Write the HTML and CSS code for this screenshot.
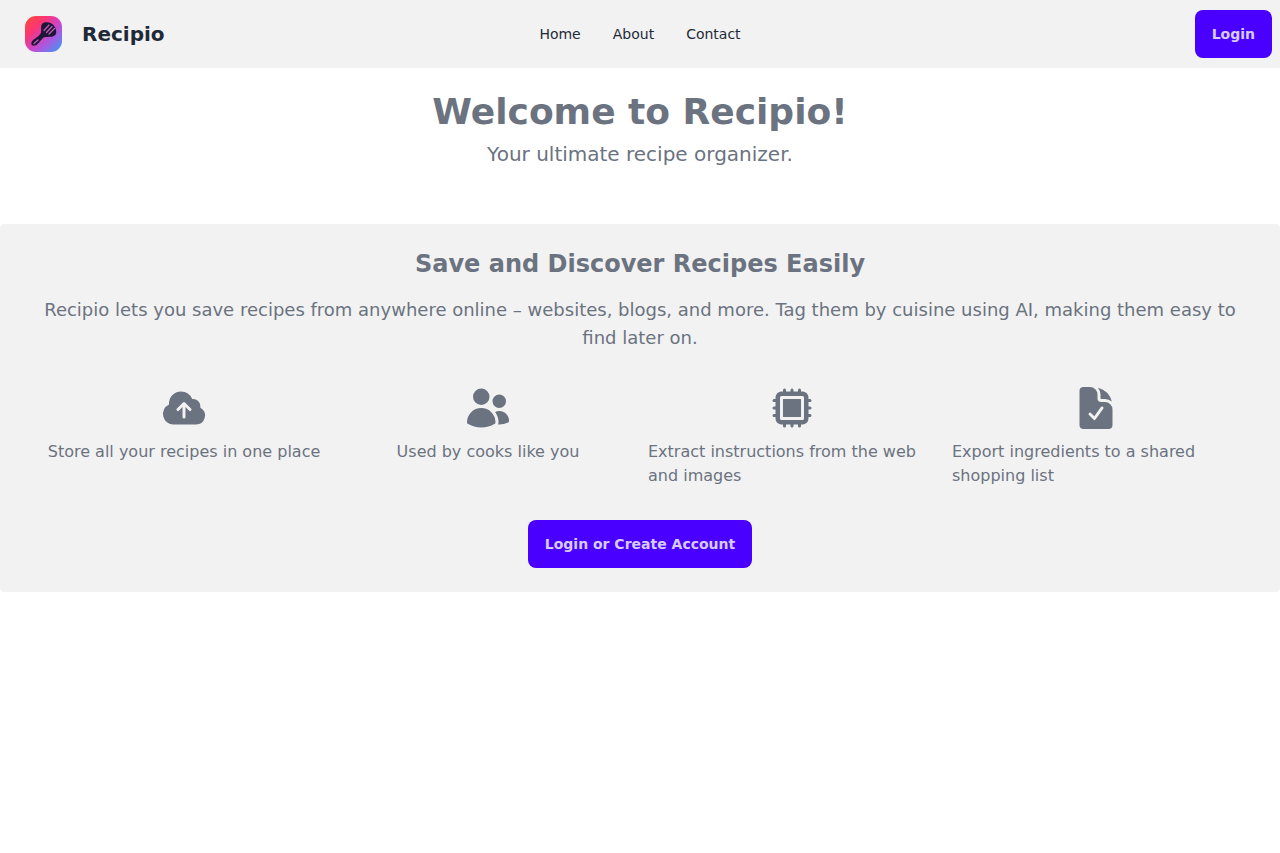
FILE: index.html
```html
<!DOCTYPE html>
<html lang="en">
<head>
  <meta charset="UTF-8">
  <title>Recipio</title>
  <meta name="viewport" content="width=device-width, initial-scale=1.0">
  <link rel="stylesheet" href="styles.css">
</head>

<body>

<header class="navbar">
  <div class="navbar-start">
    <a class="brand" href="#">
      <svg class="logo" viewBox="0 0 37 36" aria-hidden="true">
        <defs>
          <linearGradient id="logoBg" x1="0" y1="0" x2="1" y2="1">
            <stop offset="0.05" stop-color="#ff4a3c"/>
            <stop offset="0.3" stop-color="#fb3574"/>
            <stop offset="0.55" stop-color="#cf45c8"/>
            <stop offset="0.75" stop-color="#8f68e8"/>
            <stop offset="0.95" stop-color="#3f98ea"/>
          </linearGradient>
        </defs>
        <rect width="37" height="36" rx="11" fill="url(#logoBg)"/>
        <!-- spatula -->
        <path d="M17 8C18.500 5.800 23 5.600 26 7.200C29 8.800 31.500 12.500 31.200 16C31 19.500 29 20.500 25.500 20.800C21 21 19 21 17.500 22.500L12.500 28C10.500 30.300 6.500 30.300 6.300 27.500C6.200 25.500 8 24 9.500 23L13.500 20C15.800 18 16.300 16.500 16.200 13.500C16.100 11 16.100 9.500 17 8Z" fill="#1d1637"/>
        <path class="slots" d="M19 14.500L24 9M21.500 16.500L27 10.500M24 18L29.500 12.500"/>
        <path class="slots" d="M9 27.500L13 24"/>
      </svg>
      <span>Recipio</span>
    </a>
  </div>
  <nav class="menu">
    <a href="#">Home</a>
    <a href="#">About</a>
    <a href="#">Contact</a>
  </nav>
  <div class="navbar-end">
    <button class="btn" type="button">Login</button>
  </div>
</header>

<main>
  <div class="hero">
    <h1>Welcome to Recipio!</h1>
    <p>Your ultimate recipe organizer.</p>
  </div>

  <section class="features">
    <h2>Save and Discover Recipes Easily</h2>
    <p class="intro">Recipio lets you save recipes from anywhere online – websites, blogs, and more. Tag them by cuisine using AI, making them easy to find later on.</p>
    <div class="feature-grid">
      <div class="feature">
        <svg class="icon" viewBox="0 0 24 24" aria-hidden="true">
          <path fill-rule="evenodd" d="M10.5 3.75a6 6 0 0 0-5.98 6.496A5.25 5.25 0 0 0 6.75 20.25H18a4.5 4.5 0 0 0 2.206-8.423 3.75 3.75 0 0 0-4.133-4.303A6.001 6.001 0 0 0 10.5 3.75Zm2.03 5.47a.75.75 0 0 0-1.06 0l-3 3a.75.75 0 1 0 1.06 1.06l1.72-1.72v4.94a.75.75 0 0 0 1.5 0v-4.94l1.72 1.72a.75.75 0 1 0 1.06-1.06l-3-3Z"/>
        </svg>
        <p>Store all your recipes in one place</p>
      </div>
      <div class="feature">
        <svg class="icon" viewBox="0 0 24 24" aria-hidden="true">
          <path d="M4.5 6.375a4.125 4.125 0 1 1 8.25 0 4.125 4.125 0 0 1-8.25 0ZM14.25 8.625a3.375 3.375 0 1 1 6.75 0 3.375 3.375 0 0 1-6.75 0ZM1.5 19.125a7.125 7.125 0 0 1 14.25 0v.003l-.001.119a.75.75 0 0 1-.363.63 13.067 13.067 0 0 1-6.761 1.873c-2.472 0-4.786-.684-6.76-1.873a.75.75 0 0 1-.364-.63l-.001-.122ZM17.25 19.128l-.001.144a2.25 2.25 0 0 1-.233.96 10.088 10.088 0 0 0 5.06-1.01.75.75 0 0 0 .42-.643 4.875 4.875 0 0 0-6.957-4.611 8.586 8.586 0 0 1 1.71 5.157v.003Z"/>
        </svg>
        <p>Used by cooks like you</p>
      </div>
      <div class="feature">
        <svg class="icon" viewBox="0 0 24 24" aria-hidden="true">
          <path d="M16.5 7.5h-9v9h9v-9Z"/>
          <path fill-rule="evenodd" d="M8.25 2.25A.75.75 0 0 1 9 3v.75h2.25V3a.75.75 0 0 1 1.5 0v.75H15V3a.75.75 0 0 1 1.5 0v.75h.75a3 3 0 0 1 3 3v.75H21A.75.75 0 0 1 21 9h-.75v2.25H21a.75.75 0 0 1 0 1.5h-.75V15H21a.75.75 0 0 1 0 1.5h-.75v.75a3 3 0 0 1-3 3h-.75V21a.75.75 0 0 1-1.5 0v-.75h-2.25V21a.75.75 0 0 1-1.5 0v-.75H9V21a.75.75 0 0 1-1.5 0v-.75h-.75a3 3 0 0 1-3-3v-.75H3A.75.75 0 0 1 3 15h.75v-2.25H3a.75.75 0 0 1 0-1.5h.75V9H3a.75.75 0 0 1 0-1.5h.75v-.75a3 3 0 0 1 3-3h.75V3a.75.75 0 0 1 .75-.75ZM6 6.75A.75.75 0 0 1 6.75 6h10.5a.75.75 0 0 1 .75.75v10.5a.75.75 0 0 1-.75.75H6.75a.75.75 0 0 1-.75-.75V6.75Z"/>
        </svg>
        <p>Extract instructions from the web and images</p>
      </div>
      <div class="feature">
        <svg class="icon" viewBox="0 0 24 24" aria-hidden="true">
          <path fill-rule="evenodd" d="M9 1.5H5.625c-1.036 0-1.875.84-1.875 1.875v17.25c0 1.035.84 1.875 1.875 1.875h12.75c1.035 0 1.875-.84 1.875-1.875V12.75A3.75 3.75 0 0 0 16.5 9h-1.875a1.875 1.875 0 0 1-1.875-1.875V5.25A3.75 3.75 0 0 0 9 1.5Zm6.61 10.936a.75.75 0 1 0-1.22-.872l-3.236 4.53L9.53 14.47a.75.75 0 0 0-1.06 1.06l2.25 2.25a.75.75 0 0 0 1.14-.094l3.75-5.25Z"/>
          <path d="M12.971 1.816A5.23 5.23 0 0 1 14.25 5.25v1.875c0 .207.168.375.375.375H16.5a5.23 5.23 0 0 1 3.434 1.279 9.768 9.768 0 0 0-6.963-6.963Z"/>
        </svg>
        <p>Export ingredients to a shared shopping list</p>
      </div>
    </div>
    <button class="btn" type="button">Login or Create Account</button>
  </section>
</main>

</body>
</html>
```

FILE: styles.css
```css
* {margin:0;padding:0;box-sizing:border-box}
body {
  background: #fff;
  color: #6b7280;
  font-family: "DejaVu Sans", sans-serif;
  font-size: 16px;
  line-height: 24px;
}
a {
  color: inherit;
  text-decoration: none;
}

.navbar {
  display: flex;
  align-items: center;
  padding: 10px 8px;
  background: #f2f2f2;
  color: #1f2937;
}
.navbar-start,.navbar-end {
  flex: 1;
  display: flex;
  align-items: center;
}
.navbar-end {justify-content:flex-end;}
.brand {
  display: flex;
  align-items: center;
  gap: 20px;
  padding-left: 17px;
  font-size: 20px;
  line-height: 28px;
  font-weight: 700;
}
.logo {
  width: 37px;
  height: 36px;
}
.slots {
  fill: none;
  stroke: #c65bb8;
  stroke-width: 1.2;
  stroke-linecap: round;
}
.menu {
  display: flex;
  gap: 32px;
  font-size: 14px;
  line-height: 20px;
}

.btn {
  height: 48px;
  padding: 0 17px;
  background: #4a00ff;
  color: #d6ccff;
  border: none;
  border-radius: 8px;
  font-family: inherit;
  font-size: 14px;
  font-weight: 600;
  cursor: pointer;
}

.hero {
  padding: 24px 32px 56px;
  text-align: center;
}
.hero h1 {
  font-size: 36px;
  line-height: 40px;
  margin-bottom: 8px;
}
.hero p {
  font-size: 20px;
  line-height: 28px;
}

.features {
  padding: 24px 32px;
  background: #f2f2f2;
  border-radius: 4px;
  text-align: center;
}
.features h2 {
  font-size: 24px;
  line-height: 32px;
  margin-bottom: 16px;
}
.intro {
  font-size: 18px;
  line-height: 28px;
  margin-bottom: 24px;
}
.feature-grid {
  display: grid;
  grid-template-columns: repeat(4, 1fr);
  margin-bottom: 24px;
}
.feature {
  display: flex;
  flex-direction: column;
  align-items: center;
  gap: 8px;
  padding: 8px;
  text-align: left;
}
.icon {
  width: 48px;
  height: 48px;
  fill: #6b7280;
}

@media (max-width: 800px) {
  .feature-grid {grid-template-columns:repeat(2, 1fr);}
}
```
